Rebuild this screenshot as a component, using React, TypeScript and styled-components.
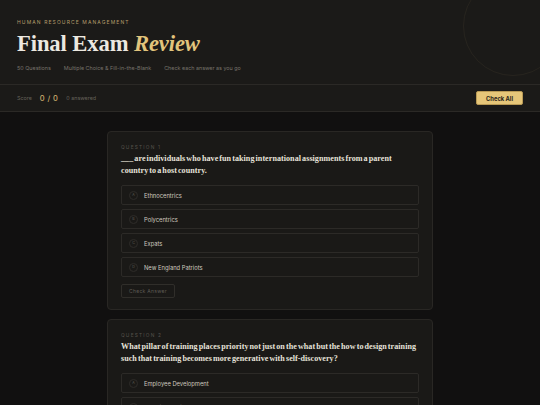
import React from "react";
import styled, { createGlobalStyle } from "styled-components";

const GlobalStyle = createGlobalStyle`
  html, body {
    margin: 0;
    padding: 0;
    background: #111010;
  }
  body {
    font-family: "Inter", "Noto Sans", sans-serif;
    -webkit-font-smoothing: antialiased;
  }
  * { box-sizing: border-box; }
`;

const Page = styled.div`
  min-height: 405px;
  background: #111010;
  color: #e8e4dc;
`;

const Hero = styled.header`
  position: relative;
  overflow: hidden;
  background: #1b1a18;
  border-bottom: 1px solid #2b2926;
  padding: 18px 17px 14px;
  height: 85px;
`;

const Ring = styled.div`
  position: absolute;
  top: -24px;
  right: -23px;
  width: 100px;
  height: 100px;
  border-radius: 50%;
  border: 1px solid rgba(200, 170, 110, 0.07);
  pointer-events: none;
`;

const Eyebrow = styled.div`
  font-size: 5px;
  letter-spacing: 1.1px;
  text-transform: uppercase;
  color: #b59d6c;
  line-height: 8px;
`;

const Title = styled.h1`
  margin: 5px 0 0;
  font-family: "Liberation Serif", "DejaVu Serif", serif;
  font-weight: 700;
  font-size: 22.6px;
  line-height: 26px;
  color: #ece8e0;
  letter-spacing: -0.1px;
`;

const Accent = styled.em`
  font-style: italic;
  color: #e2c47c;
`;

const Meta = styled.div`
  display: flex;
  gap: 13px;
  margin-top: 7px;
  font-size: 5.4px;
  color: #77726a;
  line-height: 8px;
`;

const ScoreBar = styled.div`
  display: flex;
  align-items: center;
  justify-content: space-between;
  height: 27px;
  padding: 0 17px;
  background: #1b1a18;
  border-bottom: 1px solid #2b2926;
`;

const ScoreGroup = styled.div`
  display: flex;
  align-items: center;
  gap: 8px;
`;

const Muted = styled.span`
  font-size: 5.4px;
  color: #66625b;
`;

const ScoreValue = styled.span`
  font-size: 7.5px;
  letter-spacing: 0.4px;
  color: #c9ab6c;
  font-weight: 500;
`;

const GoldButton = styled.button`
  border: 1px solid #b99a55;
  background: #e6c679;
  color: #2a2418;
  font-family: "Inter", "Noto Sans", sans-serif;
  font-weight: 700;
  font-size: 5.8px;
  height: 14px;
  padding: 0 9px;
  border-radius: 2px;
`;

const Main = styled.main`
  display: flex;
  flex-direction: column;
  align-items: center;
  gap: 9px;
  padding: 19px 0 20px;
`;

const Card = styled.section`
  width: 326px;
  background: #1a1917;
  border: 1px solid #292724;
  border-radius: 4px;
  padding: 12px 13px 11px;
`;

const QLabel = styled.div`
  font-size: 4.8px;
  letter-spacing: 1.2px;
  text-transform: uppercase;
  color: #56524c;
  line-height: 6px;
`;

const QText = styled.p`
  margin: 3px 0 8px;
  padding-right: 2px;
  font-family: "Liberation Serif", "DejaVu Serif", serif;
  font-weight: 700;
  font-size: 8.1px;
  letter-spacing: 0.04px;
  word-spacing: -1px;
  line-height: 12px;
  color: #e6e2da;
`;

const Options = styled.div`
  display: flex;
  flex-direction: column;
  gap: 4px;
`;

const Option = styled.div`
  display: flex;
  align-items: center;
  gap: 6px;
  height: 20px;
  padding: 0 7px;
  border: 1px solid #2c2a27;
  border-radius: 2px;
  background: #1a1917;
  font-size: 5.8px;
  color: #cdc8bf;
`;

const Letter = styled.span`
  display: inline-flex;
  align-items: center;
  justify-content: center;
  width: 9px;
  height: 9px;
  border-radius: 50%;
  border: 1px solid #2e2c29;
  font-size: 3.6px;
  color: #5d5953;
`;

const GhostButton = styled.button`
  margin-top: 7px;
  height: 14px;
  padding: 0 7px;
  background: transparent;
  border: 1px solid #302e2a;
  border-radius: 2px;
  font-family: "Inter", "Noto Sans", sans-serif;
  font-size: 5px;
  letter-spacing: 0.3px;
  color: #5f5b55;
`;

type Question = {
  text: string;
  options: string[];
};

const questions: Question[] = [
  {
    text: "___ are individuals who have fun taking international assignments from a parent country to a host country.",
    options: ["Ethnocentrics", "Polycentrics", "Expats", "New England Patriots"],
  },
  {
    text: "What pillar of training places priority not just on the what but the how to design training such that training becomes more generative with self-discovery?",
    options: ["Employee Development", "Learning Design", "Knowledge Transfer", "Performance Support"],
  },
];

const letters = ["A", "B", "C", "D"];

export default function App() {
  return (
    <Page>
      <GlobalStyle />
      <Hero>
        <Ring />
        <Eyebrow>Human Resource Management</Eyebrow>
        <Title>
          Final Exam <Accent>Review</Accent>
        </Title>
        <Meta>
          <span>50 Questions</span>
          <span>Multiple Choice &amp; Fill-in-the-Blank</span>
          <span>Check each answer as you go</span>
        </Meta>
      </Hero>
      <ScoreBar>
        <ScoreGroup>
          <Muted>Score</Muted>
          <ScoreValue>0 / 0</ScoreValue>
          <Muted>0 answered</Muted>
        </ScoreGroup>
        <GoldButton>Check All</GoldButton>
      </ScoreBar>
      <Main>
        {questions.map((q, i) => (
          <Card key={i}>
            <QLabel>Question {i + 1}</QLabel>
            <QText>{q.text}</QText>
            <Options>
              {q.options.map((o, j) => (
                <Option key={o}>
                  <Letter>{letters[j]}</Letter>
                  {o}
                </Option>
              ))}
            </Options>
            <GhostButton>Check Answer</GhostButton>
          </Card>
        ))}
      </Main>
    </Page>
  );
}
